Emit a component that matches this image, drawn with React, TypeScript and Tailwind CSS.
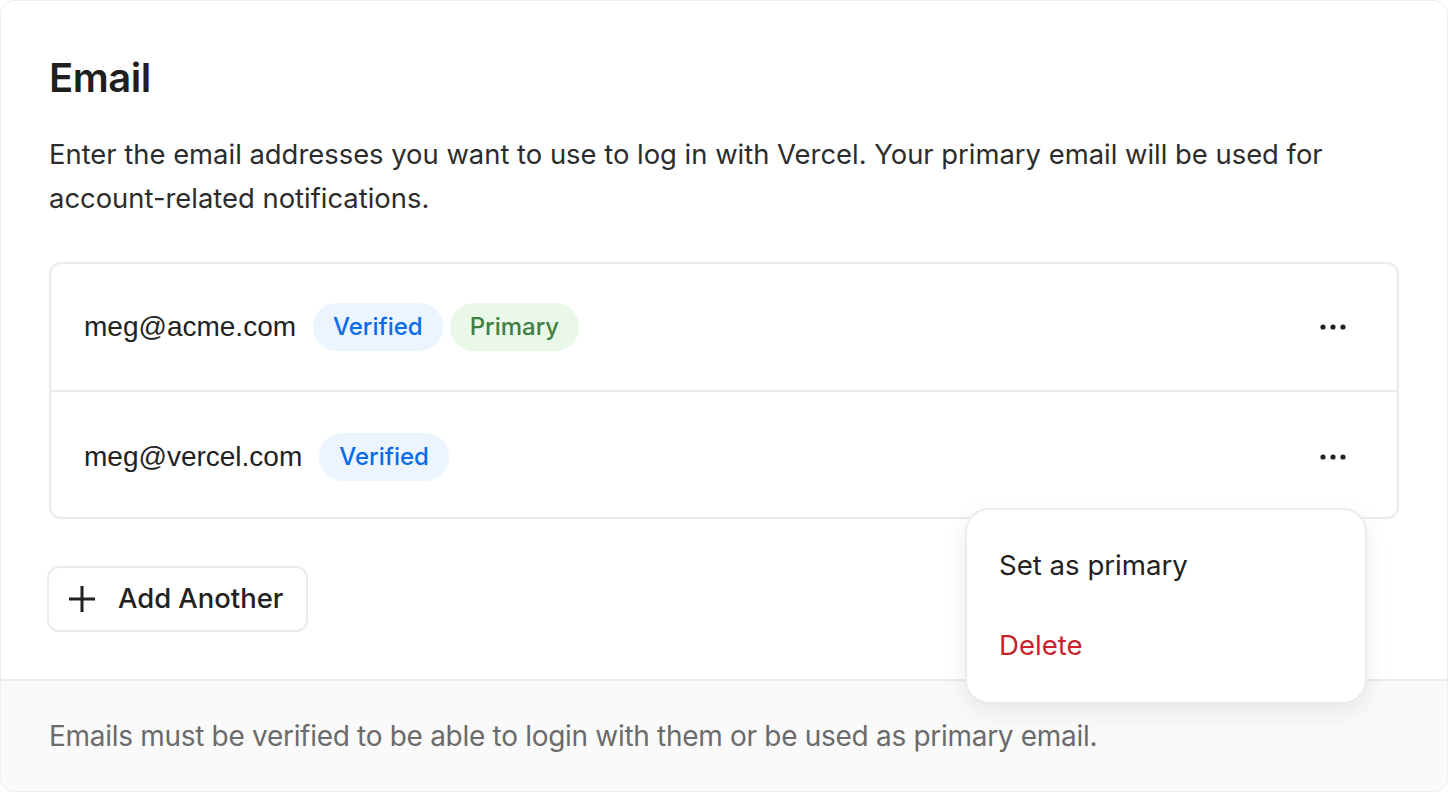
import React from 'react';

const Dots: React.FC = () => (
  <svg width="28" height="8" viewBox="0 0 28 8" fill="#222">
    <circle cx="4" cy="4" r="2.6" />
    <circle cx="14" cy="4" r="2.6" />
    <circle cx="24" cy="4" r="2.6" />
  </svg>
);

const Badge: React.FC<{ tone: 'blue' | 'green'; children: React.ReactNode }> = ({ tone, children }) => (
  <span
    className={
      tone === 'blue'
        ? 'inline-flex h-[48px] items-center rounded-full bg-[#ebf4ff] px-[20px] text-[24px] font-medium text-[#0a6ce6]'
        : 'inline-flex h-[48px] items-center rounded-full bg-[#e9f8e9] px-[20px] text-[24px] font-medium text-[#3f7f42]'
    }
  >
    {children}
  </span>
);

const App: React.FC = () => {
  return (
    <div className="h-[792px] w-[1448px] bg-white font-['Inter',sans-serif]">
      <div className="relative flex h-full flex-col overflow-hidden rounded-[14px] border border-[#ededed] bg-white">
        <div className="flex-1 px-[48px] pt-[53px]">
          <h1 className="text-[40px] font-semibold leading-[48px] tracking-[-0.5px] text-[#1f1f1f]">Email</h1>
          <p className="mt-[30px] text-[27.4px] leading-[44px] text-[#2c2c2c]">
            Enter the email addresses you want to use to log in with Vercel. Your primary email will be used for
            account-related notifications.
          </p>

          <div className="mt-[42px] rounded-[12px] border-2 border-[#ebebeb]">
            <div className="flex h-[128px] items-center border-b-2 border-[#ebebeb] pl-[33px] pr-[50px]">
              <span className="font-['Liberation_Sans',sans-serif] text-[28px] text-[#222]">meg@acme.com</span>
              <div className="ml-[17px] flex gap-[7px]">
                <Badge tone="blue">Verified</Badge>
                <Badge tone="green">Primary</Badge>
              </div>
              <div className="ml-auto flex items-center">
                <Dots />
              </div>
            </div>
            <div className="flex h-[125px] items-center pl-[33px] pr-[50px] pt-[4px]">
              <span className="font-['Liberation_Sans',sans-serif] text-[28px] text-[#222]">meg@vercel.com</span>
              <div className="ml-[17px] flex gap-[7px]">
                <Badge tone="blue">Verified</Badge>
              </div>
              <div className="ml-auto flex items-center">
                <Dots />
              </div>
            </div>
          </div>

          <button className="mt-[47px] -ml-[2px] flex h-[66px] items-center gap-[22px] rounded-[12px] border-2 border-[#ebebeb] bg-white pl-[19px] pr-[23px] text-[27.4px] font-medium text-[#222]">
            <svg width="28" height="28" viewBox="0 0 28 28" stroke="#222" strokeWidth="3" fill="none">
              <path d="M14 1v26M1 14h26" />
            </svg>
            Add Another
          </button>
        </div>

        <div className="flex h-[112px] items-center border-t-2 border-[#ebebeb] bg-[#fafafa] px-[48px]">
          <p className="text-[28px] tracking-[-0.3px] text-[#6b6b6b]">
            Emails must be verified to be able to login with them or be used as primary email.
          </p>
        </div>

        <div className="absolute left-[964px] top-[507px] w-[402px] rounded-[24px] border-2 border-[#ebebeb] bg-white py-[16px] shadow-[0_8px_24px_rgba(0,0,0,0.08)]">
          <div className="flex h-[80px] items-center px-[32px] text-[27.6px] text-[#222]">Set as primary</div>
          <div className="flex h-[80px] items-center px-[32px] text-[27.6px] text-[#c8232c]">Delete</div>
        </div>
      </div>
    </div>
  );
};

export default App;
